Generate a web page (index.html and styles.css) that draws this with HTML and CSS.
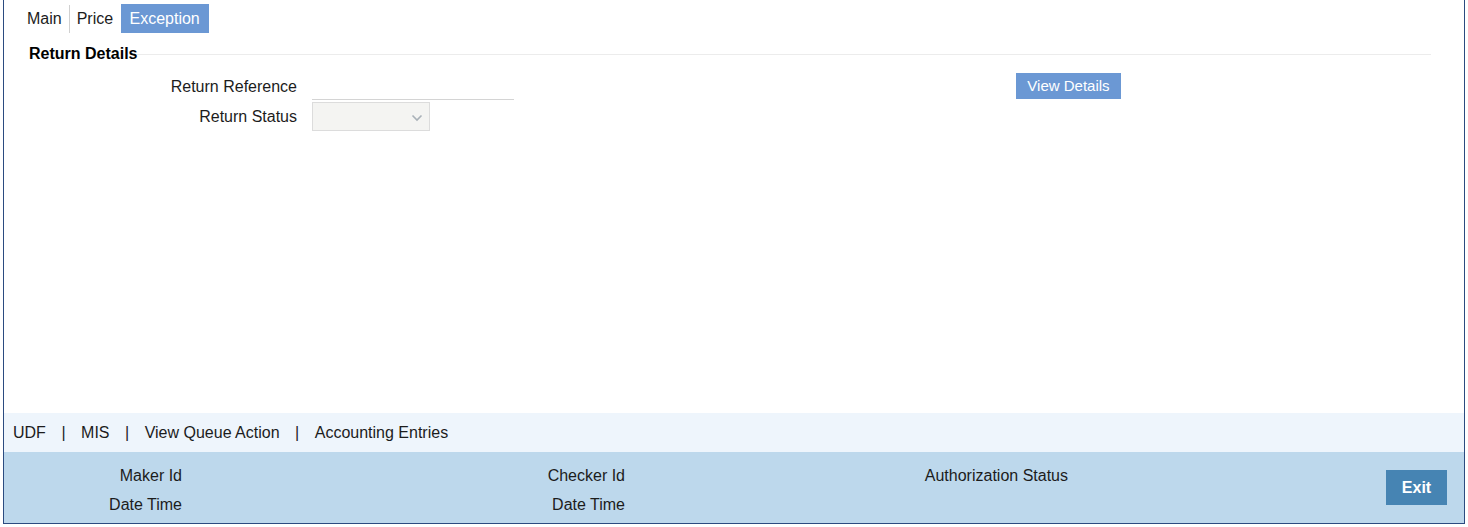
FILE: index.html
```html
<!DOCTYPE html>
<html lang="en">
<head>
<meta charset="utf-8">
<title>Exception</title>
<link rel="stylesheet" href="styles.css">
</head>
<body>
<div class="frame">
  <div class="content">
    <div class="tabs">
      <span class="tab tab-sep">Main</span>
      <span class="tab">Price</span>
      <span class="tab tab-active">Exception</span>
    </div>
    <div class="legend">
      <span class="legend-text">Return Details</span>
      <span class="legend-rule"></span>
    </div>
    <div class="form">
      <div class="fields">
        <label class="label">Return Reference</label>
        <div class="input"></div>
        <label class="label">Return Status</label>
        <div class="select">
          <svg class="chev" width="12" height="8" viewBox="0 0 12 8"><polyline points="1.5,1.5 6,6 10.5,1.5" fill="none" stroke="#a9b1b8" stroke-width="1.6"/></svg>
        </div>
      </div>
      <button class="btn-view">View Details</button>
    </div>
  </div>
  <div class="links">
    <span>UDF</span><span class="pipe">|</span><span>MIS</span><span class="pipe">|</span><span>View Queue Action</span><span class="pipe">|</span><span>Accounting Entries</span>
  </div>
  <div class="audit">
    <div class="audit-grid">
      <span class="a-label">Maker Id</span><span></span>
      <span class="a-label">Checker Id</span><span></span>
      <span class="a-label">Authorization Status</span>
      <span class="a-label">Date Time</span><span></span>
      <span class="a-label">Date Time</span><span></span>
      <span></span>
    </div>
    <button class="btn-exit">Exit</button>
  </div>
</div>
</body>
</html>
```
FILE: styles.css
```css
* { box-sizing: border-box; }
html, body { margin: 0; padding: 0; background: #fff; }
body {
  font-family: "Liberation Sans", Arial, sans-serif;
  font-size: 16px;
  color: #1c1c1c;
}
.frame {
  margin-left: 3px;
  width: 1462px;
  height: 524px;
  border-left: 1px solid #2b4b80;
  border-right: 1px solid #2b4b80;
  border-bottom: 1px solid #2b4b80;
  display: flex;
  flex-direction: column;
}
.content { height: 413px; }
.tabs {
  display: flex;
  margin-top: 4px;
  padding-left: 16px;
  height: 29px;
}
.tab {
  padding: 0 7px;
  line-height: 29px;
  height: 29px;
}
.tab-sep {
  border-right: 1px solid #d0d0d0;
  height: 28px;
  margin-top: 1px;
  line-height: 27px;
}
.tab-active {
  background: #6b98d4;
  color: #fff;
  margin-left: 1px;
  width: 88px;
  padding: 0 1px 0 0;
  text-align: center;
}
.legend {
  display: flex;
  align-items: center;
  margin-top: 12px;
  padding-left: 25px;
  padding-right: 33px;
  height: 18px;
}
.legend-text {
  font-weight: bold;
  line-height: 18px;
  color: #000;
}
.legend-rule {
  flex: 1;
  height: 1px;
  background: #ececec;
  margin-top: 1px;
}
.form {
  display: flex;
  align-items: flex-start;
  margin-top: 10px;
}
.fields {
  display: grid;
  grid-template-columns: 293px 202px;
  grid-template-rows: 27px 29px;
  column-gap: 15px;
  row-gap: 2px;
  align-items: center;
}
.label {
  text-align: right;
  line-height: 27px;
}
.input {
  height: 27px;
  border-bottom: 1px solid #d4d4d4;
}
.select {
  width: 118px;
  height: 29px;
  background: #f4f4f2;
  border: 1px solid #dcdcdc;
  display: flex;
  align-items: center;
  justify-content: flex-end;
  padding-right: 6px;
}
.chev { display: block; margin-top: 2px; }
.btn-view {
  margin-left: 502px;
  margin-top: 0;
  height: 26px;
  width: 105px;
  padding: 0;
  border: 0;
  background: #6b98d4;
  color: #fff;
  font-family: inherit;
  font-size: 15px;
  line-height: 26px;
}
.links {
  height: 39px;
  background: #eef5fc;
  padding-left: 9px;
  line-height: 39px;
  display: flex;
}
.pipe { padding: 0 15.5px; }
.audit {
  height: 71px;
  background: #bdd8ec;
  display: flex;
  align-items: center;
}
.audit-grid {
  align-self: flex-start;
  padding-top: 10px;
  display: grid;
  grid-template-columns: 178px 265px 178px 265px 178px;
  grid-template-rows: 27px 29px;
  row-gap: 2px;
}
.a-label {
  text-align: right;
  line-height: 28px;
}
.btn-exit {
  margin-left: auto;
  margin-right: 17px;
  width: 61px;
  height: 35px;
  border: 0;
  padding: 0;
  background: #4684b3;
  color: #fff;
  font-family: inherit;
  font-weight: bold;
  font-size: 16px;
}
```
